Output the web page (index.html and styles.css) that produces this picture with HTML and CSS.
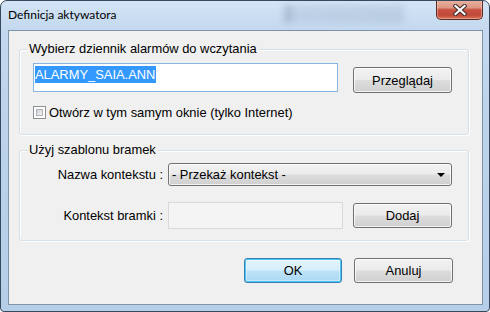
FILE: index.html
```html
<!DOCTYPE html>
<html lang="pl">
<head>
<meta charset="utf-8">
<title>Definicja aktywatora</title>
<link rel="stylesheet" href="styles.css">
</head>
<body>
<div class="window">
  <div class="titlebar">
    <span class="title">Definicja aktywatora</span>
    <div class="glass-blur" aria-hidden="true"></div>
    <div class="close" aria-label="Zamknij">
      <svg width="14" height="12" viewBox="0 0 14 12">
        <path d="M2.5 2 L11.5 10 M11.5 2 L2.5 10" stroke="#3a2a2a" stroke-width="4.2" stroke-linecap="square" fill="none"/>
        <path d="M2.5 2 L11.5 10 M11.5 2 L2.5 10" stroke="#ffffff" stroke-width="2.2" stroke-linecap="square" fill="none"/>
      </svg>
    </div>
  </div>
  <div class="client">
    <div class="group g1">
      <span class="group-title">Wybierz dziennik alarmów do wczytania</span>
      <div class="row r1">
        <div class="textbox focused"><span class="sel">ALARMY_SAIA.ANN</span></div>
        <div class="btn browse">Przeglądaj</div>
      </div>
      <div class="check-row"><span class="checkbox"></span><span class="check-label">Otwórz w tym samym oknie (tylko Internet)</span></div>
    </div>
    <div class="group g2">
      <span class="group-title">Użyj szablonu bramek</span>
      <div class="form-grid">
        <span class="lbl">Nazwa kontekstu :</span>
        <div class="combo"><span class="combo-text">- Przekaż kontekst -</span><span class="arrow"></span></div>
        <span class="lbl">Kontekst bramki :</span>
        <div class="row r2"><div class="textbox disabled"></div><div class="btn add">Dodaj</div></div>
      </div>
    </div>
    <div class="actions">
      <div class="btn default ok">OK</div>
      <div class="btn cancel">Anuluj</div>
    </div>
  </div>
</div>
</body>
</html>
```
FILE: styles.css
```css
html, body {
  margin: 0;
  padding: 0;
  background: #ffffff;
}

.window {
  width: 490px;
  height: 312px;
  box-sizing: border-box;
  border: 1px solid #36485c;
  border-radius: 7px 7px 4px 4px;
  background: linear-gradient(180deg, #d3e4f5 0px, #c4d9ef 28px, #bcd3eb 120px, #b6cee8 100%);
  padding: 0 6px 6px 7px;
  display: flex;
  flex-direction: column;
  font-family: "Liberation Sans", Arial, sans-serif;
  font-size: 12.9px;
  color: #000;
  overflow: hidden;
  position: relative;
}

.titlebar {
  height: 29px;
  flex: none;
  display: flex;
  align-items: flex-start;
  position: relative;
}

.title {
  font-family: Lato, "Noto Sans", sans-serif;
  font-size: 12px;
  line-height: 16px;
  padding-top: 6px;
  color: #000;
}

.glass-blur {
  position: absolute;
  left: 276px;
  top: 4px;
  width: 120px;
  height: 18px;
  background: linear-gradient(90deg, rgba(70,90,120,0.25) 0, rgba(70,90,120,0.25) 6px, rgba(150,170,200,0.25) 10px, rgba(120,140,170,0.2) 100%);
  filter: blur(3px);
}

.close {
  margin-left: auto;
  margin-top: -1px;
  width: 47px;
  height: 20px;
  box-sizing: border-box;
  border: 1px solid #5e2a24;
  border-top: none;
  border-radius: 0 0 5px 5px;
  background: linear-gradient(180deg, #e9b3a4 0%, #dd9783 40%, #c8503f 52%, #c24a3a 80%, #d57457 100%);
  box-shadow: inset 0 0 0 1px rgba(255,210,200,0.45);
  display: flex;
  align-items: center;
  justify-content: center;
  position: relative;
  z-index: 1;
}

.close svg {
  display: block;
}

.client {
  flex: 1;
  background: #f0f0f0;
  border: 1px solid #7f93a8;
  display: flex;
  flex-direction: column;
  padding: 18px 13px 0 10px;
}

.group {
  position: relative;
  border: 1px solid #d5dfe5;
  border-radius: 3px;
  box-shadow: inset 1px 1px 0 #ffffff, 1px 1px 0 #ffffff;
}

.group-title {
  position: absolute;
  left: 7px;
  top: -9px;
  line-height: 15px;
  padding: 0 2px 0 2px;
  background: #f0f0f0;
  white-space: nowrap;
}

.g1 {
  padding: 13px 15px 15px 13px;
}

.g2 {
  margin-top: 15px;
  padding: 12px 15px 11px 0;
}

.row {
  display: flex;
  align-items: flex-start;
}

.r1 {
  gap: 15px;
}

.textbox {
  box-sizing: border-box;
  background: #fff;
  border: 1px solid #abadb3;
}

.textbox.focused {
  width: 305px;
  height: 29px;
  border-color: #88b5e0;
  padding: 2px 1px;
}

.sel {
  display: inline-block;
  line-height: 17px;
  background: #3399ff;
  color: #fff;
  vertical-align: top;
  padding-right: 1px;
}

.btn {
  box-sizing: border-box;
  width: 99px;
  height: 26px;
  border: 1px solid #707070;
  border-radius: 3px;
  background: linear-gradient(180deg, #f2f2f2 0%, #ebebeb 48%, #dddddd 52%, #cfcfcf 100%);
  box-shadow: inset 0 0 0 1px rgba(255,255,255,0.75);
  display: flex;
  align-items: center;
  justify-content: center;
  line-height: 15px;
}

.browse {
  margin-top: 4px;
}

.check-row {
  margin-top: 13px;
  display: flex;
  align-items: center;
  height: 13px;
}

.checkbox {
  width: 13px;
  height: 13px;
  box-sizing: border-box;
  border: 1px solid #8e8f8f;
  background: #fff;
  position: relative;
  flex: none;
}

.checkbox::after {
  content: "";
  position: absolute;
  left: 2px;
  top: 2px;
  right: 2px;
  bottom: 2px;
  border: 1px solid #aeb3b9;
  background: linear-gradient(135deg, #cbcfd5 0%, #e4e6e9 60%, #f4f4f4 100%);
  box-sizing: border-box;
}

.check-label {
  margin-left: 3px;
  line-height: 15px;
  white-space: nowrap;
}

.form-grid {
  display: grid;
  grid-template-columns: 143px 284px;
  column-gap: 5px;
  row-gap: 16px;
  align-items: center;
}

.lbl {
  text-align: right;
  white-space: nowrap;
  line-height: 15px;
}

.combo {
  box-sizing: border-box;
  height: 23px;
  border: 1px solid #707070;
  border-radius: 3px;
  background: linear-gradient(180deg, #f2f2f2 0%, #ebebeb 48%, #dddddd 52%, #cfcfcf 100%);
  box-shadow: inset 0 0 0 1px rgba(255,255,255,0.75);
  display: flex;
  align-items: center;
  padding: 0 4px 0 3px;
}

.combo-text {
  flex: 1;
  line-height: 15px;
  white-space: nowrap;
}

.arrow {
  width: 0;
  height: 0;
  border-left: 4px solid transparent;
  border-right: 4px solid transparent;
  border-top: 4px solid #000;
  margin-right: 2px;
}

.r2 {
  gap: 10px;
}

.textbox.disabled {
  width: 175px;
  height: 27px;
  background: #f4f4f4;
  border-color: #d9d9d9;
}

.add {
  height: 25px;
  margin-top: 1px;
}

.actions {
  display: flex;
  justify-content: flex-end;
  gap: 12px;
  margin-top: 17px;
  padding-right: 16px;
}

.actions .btn {
  height: 25px;
}

.ok {
  width: 98px;
}

.btn.default {
  border-color: #3c7fb1;
  background: linear-gradient(180deg, #e5f4fc 0%, #d6eefb 48%, #bde3f8 52%, #a9d8f3 100%);
  box-shadow: inset 0 0 0 1px #48c6f7, inset 0 0 0 2px rgba(255,255,255,0.35);
}
```
